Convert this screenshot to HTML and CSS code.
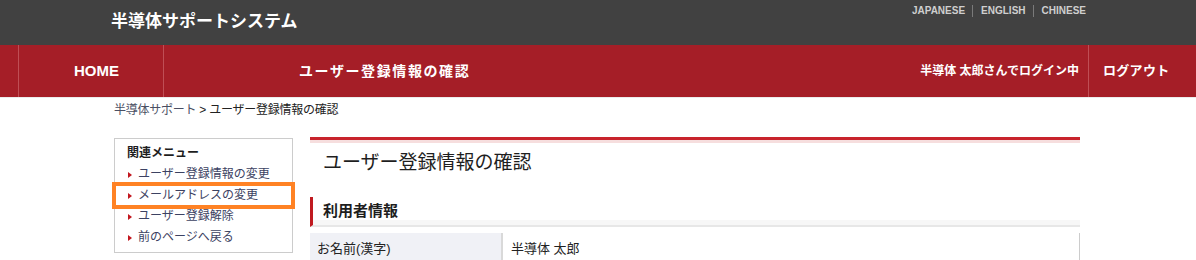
FILE: index.html
```html
<!DOCTYPE html>
<html lang="ja">
<head>
<meta charset="utf-8">
<title>ユーザー登録情報の確認</title>
<link rel="stylesheet" href="styles.css">
</head>
<body>
<header class="topbar">
  <div class="topbar-inner">
    <div class="site-title">半導体サポートシステム</div>
    <ul class="lang">
      <li>JAPANESE</li>
      <li>ENGLISH</li>
      <li>CHINESE</li>
    </ul>
  </div>
</header>
<nav class="gnav">
  <div class="gnav-spacer"></div>
  <div class="gnav-home">HOME</div>
  <div class="gnav-title">ユーザー登録情報の確認</div>
  <div class="gnav-user">半導体 太郎さんでログイン中</div>
  <div class="gnav-logout">ログアウト</div>
</nav>
<div class="container">
  <div class="breadcrumb"><span class="crumb-link">半導体サポート</span> &gt; ユーザー登録情報の確認</div>
  <div class="columns">
    <aside class="side">
      <div class="side-box">
        <div class="side-title">関連メニュー</div>
        <ul class="side-menu">
          <li><span class="tri"></span>ユーザー登録情報の変更</li>
          <li><span class="tri"></span>メールアドレスの変更</li>
          <li><span class="tri"></span>ユーザー登録解除</li>
          <li><span class="tri"></span>前のページへ戻る</li>
        </ul>
      </div>
      <div class="highlight"></div>
    </aside>
    <main class="main">
      <div class="main-topline"></div>
      <h1 class="page-title">ユーザー登録情報の確認</h1>
      <h2 class="section-title">利用者情報</h2>
      <table class="info">
        <tr>
          <th>お名前(漢字)</th>
          <td>半導体 太郎</td>
        </tr>
      </table>
    </main>
  </div>
</div>
</body>
</html>
```
FILE: styles.css
```css
html, body {
  margin: 0;
  padding: 0;
  overflow: hidden;
  background: #fff;
}
body {
  font-family: "Liberation Sans", "Noto Sans CJK JP", sans-serif;
  color: #222;
  height: 260px;
}
ul { list-style: none; margin: 0; padding: 0; }

.topbar {
  background: #414141;
  height: 45px;
}
.topbar-inner {
  width: 980px;
  margin: 0 auto;
  display: flex;
  justify-content: space-between;
  align-items: flex-start;
}
.site-title {
  color: #fff;
  font-weight: bold;
  font-size: 17px;
  line-height: 22px;
  padding: 11px 0 0 3px;
}
.lang {
  display: flex;
  padding: 5px 2px 0 0;
}
.lang li {
  color: #cfcfcf;
  font-weight: bold;
  font-size: 10px;
  line-height: 12px;
  padding: 0 7px 0 8px;
  border-left: 1px solid #7a7a7a;
}
.lang li:first-child { border-left: none; }
.lang li:last-child { padding-right: 0; }

.gnav {
  display: flex;
  background: #a51e27;
  height: 52px;
  line-height: 52px;
  color: #fff;
  font-weight: bold;
  border-bottom: 1px solid #ececec;
}
.gnav-spacer { width: 18px; }
.gnav-home {
  width: 89px;
  padding-left: 55px;
  border-left: 1px solid #bf4e55;
  font-size: 15px;
}
.gnav-title {
  flex: 1;
  border-left: 1px solid #bf4e55;
  padding-left: 135px;
  font-size: 14px;
  letter-spacing: 1.6px;
}
.gnav-user {
  font-size: 12px;
  padding-right: 9px;
}
.gnav-logout {
  border-left: 1px solid #bf4e55;
  width: 93px;
  padding-left: 14px;
  font-size: 13px;
  letter-spacing: 0.3px;
}

.container {
  width: 970px;
  margin: 0 auto;
}
.breadcrumb {
  font-size: 12px;
  line-height: 20px;
  padding: 2px 0 0 1px;
  color: #222;
  letter-spacing: -0.25px;
}
.crumb-link { color: #4a4f63; }

.columns {
  display: flex;
  margin-top: 17px;
}
.side {
  position: relative;
  width: 179px;
  margin: 1px 0 0 1px;
}
.side-box {
  border: 1px solid #cccccc;
  padding: 3px 12px 4px 12px;
}
.side-title {
  font-size: 12px;
  font-weight: bold;
  line-height: 22px;
  color: #1e1e1e;
}
.side-menu li {
  font-size: 12px;
  line-height: 21px;
  color: #3c4262;
  display: flex;
  align-items: center;
  white-space: nowrap;
}
.tri {
  display: inline-block;
  width: 0;
  height: 0;
  border-left: 4px solid #c2161e;
  border-top: 3px solid transparent;
  border-bottom: 3px solid transparent;
  margin: 0 6px 0 1px;
}
.highlight {
  position: absolute;
  left: -2px;
  top: 44px;
  width: 175px;
  height: 19px;
  border: 4px solid #ff8224;
}

.main {
  width: 770px;
  margin-left: 17px;
}
.main-topline {
  border-top: 3px solid #c8232c;
  border-bottom: 3px solid #f6dede;
}
.page-title {
  margin: 6px 0 0;
  padding-left: 13px;
  font-size: 19px;
  font-weight: normal;
  line-height: 28px;
  color: #1e1e1e;
}
.section-title {
  margin: 20px 0 0;
  padding-left: 10px;
  font-size: 15px;
  font-weight: bold;
  line-height: 28px;
  color: #1e1e1e;
  border-left: 3px solid #c01a20;
  border-bottom: 2px solid #e7e7e7;
  background: linear-gradient(#fff 0, #fff 82%, #f7f7f7 82%, #f7f7f7 100%);
}
.info {
  margin-top: 6px;
  width: 100%;
  border-collapse: collapse;
  border-right: 1px solid #cccccc;
}
.info th, .info td {
  font-size: 13px;
  font-weight: normal;
  text-align: left;
  line-height: 20px;
  padding: 6px 8px;
  color: #222;
}
.info th {
  width: 176px;
  background: #f0f1f6;
  border-right: 2px solid #d9d9d9;
  padding-left: 7px;
}
```
